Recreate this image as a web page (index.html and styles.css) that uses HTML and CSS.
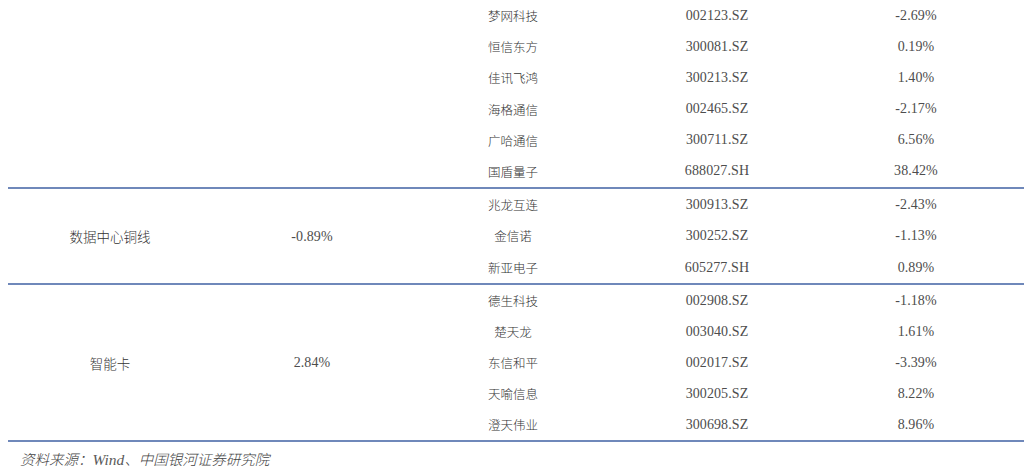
FILE: index.html
```html
<!DOCTYPE html>
<html lang="zh">
<head>
<meta charset="utf-8">
<link rel="stylesheet" href="styles.css">
</head>
<body>
<div class="tbl">
  <div class="grp g1">
    <div class="cell lead r6"></div>
    <div class="cell lead num r6"></div>
    <div class="cell">梦网科技</div><div class="cell num">002123.SZ</div><div class="cell num pct">-2.69%</div>
    <div class="cell">恒信东方</div><div class="cell num">300081.SZ</div><div class="cell num pct">0.19%</div>
    <div class="cell">佳讯飞鸿</div><div class="cell num">300213.SZ</div><div class="cell num pct">1.40%</div>
    <div class="cell">海格通信</div><div class="cell num">002465.SZ</div><div class="cell num pct">-2.17%</div>
    <div class="cell">广哈通信</div><div class="cell num">300711.SZ</div><div class="cell num pct">6.56%</div>
    <div class="cell">国盾量子</div><div class="cell num">688027.SH</div><div class="cell num pct">38.42%</div>
  </div>
  <div class="grp g2">
    <div class="cell lead r3">数据中心铜线</div>
    <div class="cell lead num r3">-0.89%</div>
    <div class="cell">兆龙互连</div><div class="cell num">300913.SZ</div><div class="cell num pct">-2.43%</div>
    <div class="cell">金信诺</div><div class="cell num">300252.SZ</div><div class="cell num pct">-1.13%</div>
    <div class="cell">新亚电子</div><div class="cell num">605277.SH</div><div class="cell num pct">0.89%</div>
  </div>
  <div class="grp g3">
    <div class="cell lead r5">智能卡</div>
    <div class="cell lead num r5">2.84%</div>
    <div class="cell">德生科技</div><div class="cell num">002908.SZ</div><div class="cell num pct">-1.18%</div>
    <div class="cell">楚天龙</div><div class="cell num">003040.SZ</div><div class="cell num pct">1.61%</div>
    <div class="cell">东信和平</div><div class="cell num">002017.SZ</div><div class="cell num pct">-3.39%</div>
    <div class="cell">天喻信息</div><div class="cell num">300205.SZ</div><div class="cell num pct">8.22%</div>
    <div class="cell">澄天伟业</div><div class="cell num">300698.SZ</div><div class="cell num pct">8.96%</div>
  </div>
</div>
<p class="source">资料来源：<span class="latin">Wind</span>、中国银河证券研究院</p>
</body>
</html>
```
FILE: styles.css
```css
html, body {
  margin: 0;
  padding: 0;
  background: #ffffff;
}
body {
  padding-left: 8px;
  color: #3a3a3a;
}
.tbl {
  width: 1016px;
}
.grp {
  display: grid;
  grid-template-columns: 204px 200px 202px 206px 204px;
  grid-auto-flow: row dense;
  border-bottom: 2px solid #6f88ba;
}
.g1 { height: 187px; grid-template-rows: repeat(6, 1fr); }
.g2 { height: 94px; grid-template-rows: repeat(3, 1fr); }
.g3 { height: 155px; grid-template-rows: repeat(5, 1fr); }
.g1 .lead:nth-child(1), .g2 .lead:nth-child(1), .g3 .lead:nth-child(1) { grid-column: 1; }
.g1 .lead:nth-child(2), .g2 .lead:nth-child(2), .g3 .lead:nth-child(2) { grid-column: 2; }
.r6 { grid-row: 1 / span 6; }
.r3 { grid-row: 1 / span 3; }
.r5 { grid-row: 1 / span 5; }
.cell {
  display: flex;
  align-items: center;
  justify-content: center;
  white-space: nowrap;
  font-family: "Noto Sans CJK SC", sans-serif;
  font-size: 12.5px;
  font-weight: 300;
  color: #333333;
}
.cell.lead {
  font-size: 13.5px;
}
.cell.num {
  font-family: "Liberation Serif", serif;
  font-size: 14px;
  font-weight: 400;
  color: #4d4d4d;
  letter-spacing: 0.1px;
}
.g2 .cell.num, .g3 .cell.num { padding-top: 1px; }
.cell.pct {
  padding-right: 12px;
}
.source {
  margin: 6px 0 0 12px;
  font-family: "Noto Sans CJK SC", sans-serif;
  font-style: italic;
  font-size: 14.5px;
  font-weight: 300;
  color: #444444;
}
.source .latin {
  font-family: "Liberation Serif", serif;
  font-size: 15.5px;
  color: #5a5a5a;
}
```
